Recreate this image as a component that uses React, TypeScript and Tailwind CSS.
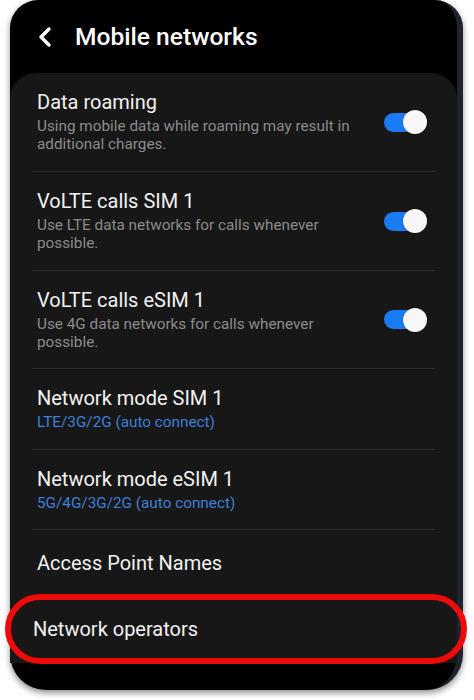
import { ChevronLeft } from 'lucide-react';

const font = { fontFamily: 'Roboto, "Noto Sans", sans-serif' };

type Row = {
  title: string;
  sub?: string;
  blue?: boolean;
  toggle?: boolean;
  h: string;
};

const rows: Row[] = [
  { title: 'Data roaming', sub: 'Using mobile data while roaming may result in additional charges.', toggle: true, h: 'h-[98px]' },
  { title: 'VoLTE calls SIM 1', sub: 'Use LTE data networks for calls whenever possible.', toggle: true, h: 'h-[98px]' },
  { title: 'VoLTE calls eSIM 1', sub: 'Use 4G data networks for calls whenever possible.', toggle: true, h: 'h-[97px]' },
  { title: 'Network mode SIM 1', sub: 'LTE/3G/2G (auto connect)', blue: true, h: 'h-[80px]' },
  { title: 'Network mode eSIM 1', sub: '5G/4G/3G/2G (auto connect)', blue: true, h: 'h-[79px]' },
  { title: 'Access Point Names', h: 'h-[65px]' },
];

function Toggle() {
  return (
    <div className="flex h-[19px] w-[43px] shrink-0 items-center justify-end rounded-full bg-[#1a7cf4]">
      <div className="h-[24px] w-[24px] shrink-0 rounded-full bg-[#f7f7f7] shadow-[0_0_2px_rgba(0,0,0,0.4)]" />
    </div>
  );
}

export default function App() {
  return (
    <div className="h-[700px] w-[474px] overflow-hidden bg-white" style={font}>
      <div className="ml-[10px] flex h-[690px] w-[453px] flex-col rounded-t-[28px] rounded-b-[36px] border-r-[6px] border-[#1d242b] bg-black shadow-[0_3px_6px_rgba(0,0,0,0.45)]">
        <div className="flex h-[73px] shrink-0 items-start pt-[21px]">
          <ChevronLeft className="ml-[19px] h-[32px] w-[32px] text-white" strokeWidth={2.6} />
          <span className="ml-[14px] text-[24.6px] font-medium leading-[32px] text-white">Mobile networks</span>
        </div>

        <div className="flex h-[590px] flex-col rounded-t-[26px] bg-[#171717]">
          {rows.map((r, i) => (
            <div key={r.title}>
              {i > 0 && <div className="mx-[22px] h-px bg-[#2e2e2e]" />}
              <div className={`flex ${r.h} items-center pl-[27px] pr-[30px]`}>
                <div className="flex w-[335px] flex-col gap-[4px]">
                  <span className="text-[20px] leading-[22px] text-[#f2f2f2]">{r.title}</span>
                  {r.sub && (
                    <span className={`text-[15.3px] leading-[18px] ${r.blue ? 'text-[#3f7fd8]' : 'text-[#8b8b8b]'}`}>
                      {r.sub}
                    </span>
                  )}
                </div>
                <div className="flex-1" />
                {r.toggle && <Toggle />}
              </div>
            </div>
          ))}
          <div className="relative flex h-[68px] items-center pl-[23px]">
            <span className="text-[20px] leading-[22px] text-[#f2f2f2]">Network operators</span>
            <div className="pointer-events-none absolute -top-[1px] -bottom-[1px] -left-[5px] -right-[10px] rounded-full border-[6px] border-[#ee0a0a]" />
          </div>
        </div>
      </div>
    </div>
  );
}
